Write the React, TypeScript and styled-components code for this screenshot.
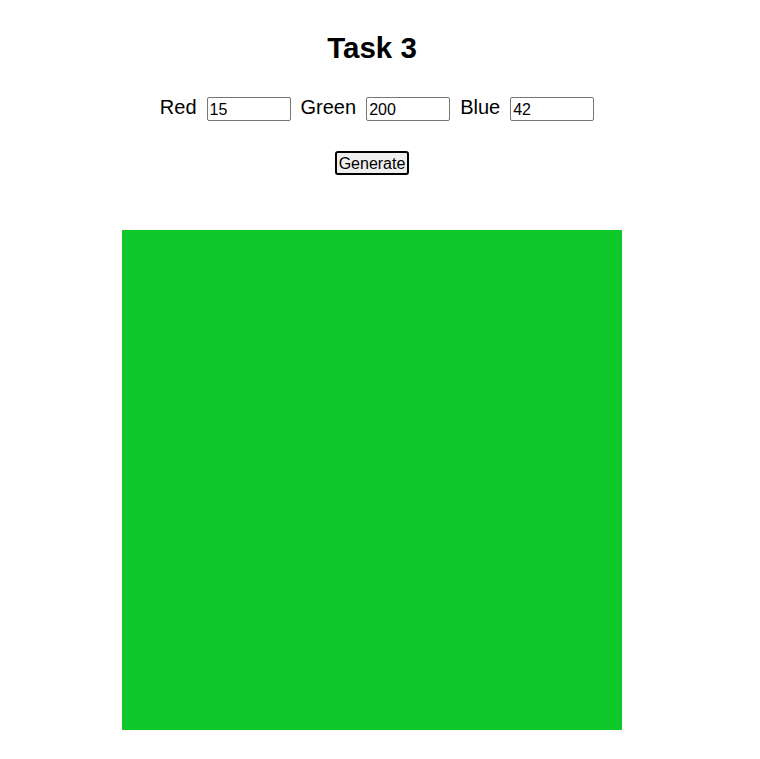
import React, { useState } from "react";
import styled, { createGlobalStyle } from "styled-components";

const Global = createGlobalStyle`
  html, body { margin: 0; padding: 0; background: #fff; }
  body { font-family: "Liberation Sans", Arial, sans-serif; color: #000; }
`;

const Page = styled.div`
  width: 744px;
  display: flex;
  flex-direction: column;
  align-items: center;
  padding-top: 30px;
`;

const Title = styled.h1`
  margin: 0;
  font-size: 29.5px;
  line-height: 36px;
  font-weight: bold;
`;

const Controls = styled.div`
  margin-top: 31px;
  padding-left: 10px;
  display: flex;
  align-items: center;
  height: 24px;
`;

const Label = styled.label<{ $first?: boolean }>`
  font-size: 20px;
  line-height: 23px;
  margin-bottom: 4px;
  margin-right: 10px;
  margin-left: ${(p) => (p.$first ? "0" : "10px")};
`;

const NumInput = styled.input`
  box-sizing: border-box;
  width: 84px;
  height: 24px;
  border: 1px solid #767676;
  border-radius: 2px;
  padding: 2px 2px 0;
  font-family: "Liberation Sans", Arial, sans-serif;
  font-size: 16px;
  color: #000;
  background: #fff;
  outline: none;
`;

const Button = styled.button`
  margin-top: 30px;
  box-sizing: border-box;
  width: 74px;
  height: 24px;
  padding: 1px 0;
  border: 2px solid #000;
  border-radius: 3px;
  background: #efefef;
  font-family: "Liberation Sans", Arial, sans-serif;
  font-size: 16px;
  line-height: 17px;
  color: #000;
`;

const Swatch = styled.div`
  margin-top: 55px;
  width: 500px;
  height: 500px;
`;

export default function App() {
  const [r, setR] = useState("15");
  const [g, setG] = useState("200");
  const [b, setB] = useState("42");
  return (
    <>
      <Global />
      <Page>
        <Title>Task 3</Title>
        <Controls>
          <Label $first>Red</Label>
          <NumInput value={r} onChange={(e) => setR(e.target.value)} />
          <Label>Green</Label>
          <NumInput value={g} onChange={(e) => setG(e.target.value)} />
          <Label>Blue</Label>
          <NumInput value={b} onChange={(e) => setB(e.target.value)} />
        </Controls>
        <Button>Generate</Button>
        <Swatch style={{ background: `rgb(${r}, ${g}, ${b})` }} />
      </Page>
    </>
  );
}
